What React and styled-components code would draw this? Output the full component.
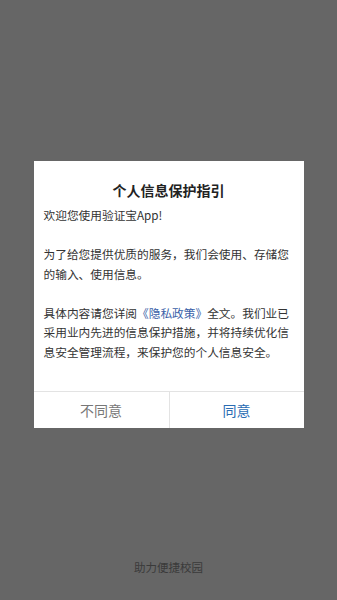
import styled, { createGlobalStyle } from 'styled-components';

const GlobalStyle = createGlobalStyle`
  html, body {
    margin: 0;
    padding: 0;
    background: #666666;
  }
  body {
    font-family: "Noto Sans CJK SC", "Noto Sans", sans-serif;
  }
`;

const Page = styled.div`
  height: 100vh;
  display: flex;
  flex-direction: column;
  background: #666666;
`;

const Main = styled.main`
  flex: 1;
  display: flex;
  justify-content: center;
  align-items: flex-start;
  padding-top: 161px;
`;

const Dialog = styled.section`
  width: 270px;
  background: #ffffff;
  display: flex;
  flex-direction: column;
`;

const Body = styled.div`
  padding: 19px 10px 29px;
`;

const Title = styled.h2`
  margin: 0 0 5px;
  font-size: 14px;
  line-height: 20px;
  font-weight: 700;
  color: #222222;
  text-align: center;
`;

const Paragraph = styled.p`
  margin: 0 0 19.5px;
  font-size: 11.7px;
  line-height: 19.6px;
  color: #333333;
  &:last-child {
    margin-bottom: 0;
  }
`;

const Link = styled.span`
  color: #3a5fa8;
`;

const Actions = styled.div`
  display: grid;
  grid-template-columns: 1fr 1fr;
  border-top: 1px solid #e3e3e3;
`;

const ActionButton = styled.button`
  height: 36px;
  padding: 0;
  border: none;
  background: #ffffff;
  font-family: inherit;
  font-size: 14px;
  color: ${(p) => (p.$primary ? '#2a6cb3' : '#777777')};
  cursor: pointer;
  & + & {
    border-left: 1px solid #e3e3e3;
  }
`;

const Footer = styled.footer`
  text-align: center;
  font-size: 11.5px;
  line-height: 16px;
  color: #3a3a3a;
  padding-bottom: 25px;
`;

export default function App() {
  return (
    <Page>
      <GlobalStyle />
      <Main>
        <Dialog>
          <Body>
            <Title>个人信息保护指引</Title>
            <Paragraph>欢迎您使用验证宝App!</Paragraph>
            <Paragraph>为了给您提供优质的服务，我们会使用、存储您的输入、使用信息。</Paragraph>
            <Paragraph>
              具体内容请您详阅<Link>《隐私政策》</Link>全文。我们业已采用业内先进的信息保护措施，并将持续优化信息安全管理流程，来保护您的个人信息安全。
            </Paragraph>
          </Body>
          <Actions>
            <ActionButton>不同意</ActionButton>
            <ActionButton $primary>同意</ActionButton>
          </Actions>
        </Dialog>
      </Main>
      <Footer>助力便捷校园</Footer>
    </Page>
  );
}
